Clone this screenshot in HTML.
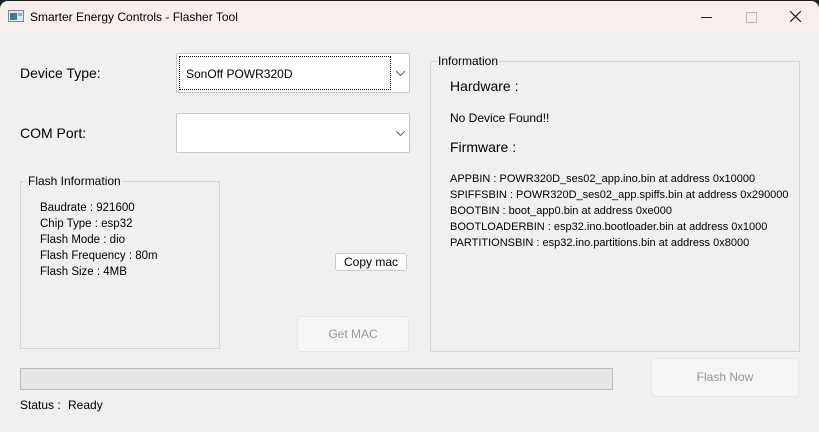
<!DOCTYPE html><html><head><style>
body{margin:0;width:819px;height:432px;overflow:hidden;background:#202020;font-family:"Liberation Sans",sans-serif;color:#000}
.win{position:absolute;left:0;top:1px;width:819px;height:431px;background:#f0f0f0;border-radius:8px 8px 0 0;overflow:hidden}
.tb{position:absolute;left:0;top:0;width:819px;height:31px;background:#f8eeee}
.a{position:absolute;white-space:nowrap}
.s{font-size:12px}
.box{position:absolute;border:1px solid #d6d6d6}
.cb{position:absolute;background:#fff;border:1px solid #c8c8c8;border-radius:2px}
.btn{position:absolute;background:#fdfdfd;border:1px solid #ccc;border-radius:3px;font-size:12px;text-align:center}
</style></head><body><div class="win">
<div class="tb">
<svg class="a" style="left:8px;top:9px" width="16" height="12"><rect x=".5" y=".5" width="15" height="11" fill="#dfe6ea" stroke="#7a8a96"/><rect x="2" y="3" width="7" height="7" fill="#3b7f8a"/><rect x="10" y="3" width="4" height="3" fill="#9ab"/></svg>
<div class="a s" style="left:30px;top:9px">Smarter Energy Controls - Flasher Tool</div>
<div class="a" style="left:701px;top:16px;width:11px;height:1px;background:#222"></div>
<div class="a" style="left:746px;top:11px;width:9px;height:9px;border:1px solid #bbb"></div>
<svg class="a" style="left:790px;top:10px" width="11" height="11"><path d="M0 0L11 11M11 0L0 11" stroke="#222" stroke-width="1.2"/></svg>
</div>
<div class="a" style="left:20px;top:64px;font-size:14px">Device Type:</div>
<div class="a" style="left:20px;top:124px;font-size:14px">COM Port:</div>
<div class="cb" style="left:176px;top:52px;width:232px;height:38px"><div class="a" style="left:2px;top:2px;width:210px;height:32px;border:1px dotted #000"></div><div class="a s" style="left:9px;top:13px">SonOff POWR320D</div><svg class="a" style="left:219px;top:17px" width="9" height="5"><path d="M0 0L4.5 4.5L9 0" fill="none" stroke="#666"/></svg></div>
<div class="cb" style="left:176px;top:112px;width:232px;height:38px"><svg class="a" style="left:219px;top:17px" width="9" height="5"><path d="M0 0L4.5 4.5L9 0" fill="none" stroke="#666"/></svg></div>
<div class="box" style="left:20px;top:180px;width:198px;height:166px"></div>
<div class="a s" style="left:27px;top:173px;background:#f0f0f0;padding:0 1px">Flash Information</div>
<div class="a" style="left:40px;top:199px;line-height:16px;font-size:11.5px">Baudrate : 921600<br>Chip Type : esp32<br>Flash Mode : dio<br>Flash Frequency : 80m<br>Flash Size : 4MB</div>
<div class="btn" style="left:335px;top:252px;width:70px;height:16px;line-height:16px">Copy mac</div>
<div class="btn" style="left:297px;top:315px;width:110px;height:34px;line-height:34px;color:#999;background:#f5f5f5;border-color:#e5e5e5">Get MAC</div>
<div class="box" style="left:430px;top:60px;width:368px;height:289px"></div>
<div class="a s" style="left:437px;top:53px;background:#f0f0f0;padding:0 1px">Information</div>
<div class="a" style="left:450px;top:77px;font-size:14px">Hardware :</div>
<div class="a s" style="left:450px;top:110px">No Device Found!!</div>
<div class="a" style="left:450px;top:138px;font-size:14px">Firmware :</div>
<div class="a" style="left:450px;top:170px;line-height:16px;font-size:11px">APPBIN : POWR320D_ses02_app.ino.bin at address 0x10000<br>SPIFFSBIN : POWR320D_ses02_app.spiffs.bin at address 0x290000<br>BOOTBIN : boot_app0.bin at address 0xe000<br>BOOTLOADERBIN : esp32.ino.bootloader.bin at address 0x1000<br>PARTITIONSBIN : esp32.ino.partitions.bin at address 0x8000</div>
<div class="a" style="left:20px;top:367px;width:591px;height:20px;background:#e6e6e6;border:1px solid #bcbcbc"></div>
<div class="btn" style="left:651px;top:357px;width:146px;height:37px;line-height:37px;color:#999;background:#f5f5f5;border-color:#e5e5e5">Flash Now</div>
<div class="a s" style="left:20px;top:397px">Status :</div>
<div class="a s" style="left:68px;top:397px">Ready</div>
</div></body></html>
